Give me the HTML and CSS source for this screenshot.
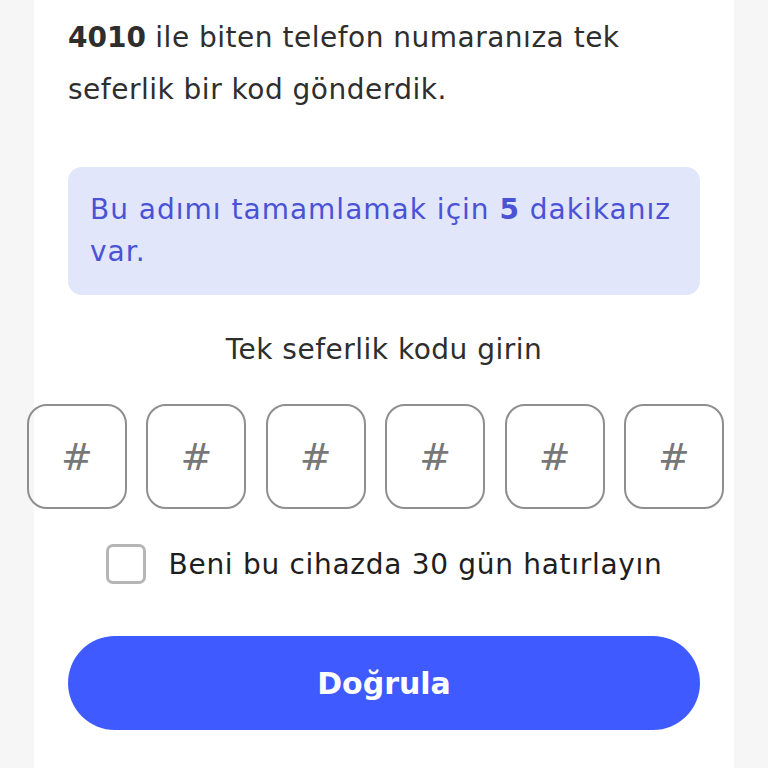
FILE: index.html
```html
<!DOCTYPE html>
<html lang="tr">
<head>
    <meta charset="UTF-8">
    <meta name="viewport" content="width=device-width, initial-scale=1.0">
    <title>Doğrulama</title>
    <link rel="stylesheet" href="styles.css">
</head>
<body>
    <div class="panel">
        <p class="lead"><strong>4010</strong> ile biten telefon numaranıza tek seferlik bir kod gönderdik.</p>

        <div class="notice">
            Bu adımı tamamlamak için <strong>5</strong> dakikanız var.
        </div>

        <div class="code-label">Tek seferlik kodu girin</div>

        <div class="otp">
            <div class="cell">#</div>
            <div class="cell">#</div>
            <div class="cell">#</div>
            <div class="cell">#</div>
            <div class="cell">#</div>
            <div class="cell">#</div>
        </div>

        <label class="remember">
            <span class="checkbox"></span>
            <span>Beni bu cihazda 30 gün hatırlayın</span>
        </label>

        <button class="verify">Doğrula</button>
    </div>
</body>
</html>
```

FILE: styles.css
```css
body {
    margin: 0;
    background-color: #f6f6f6;
    font-family: "DejaVu Sans", "Noto Sans", sans-serif;
    color: #2e2e2e;
}
.panel {
    width: 632px;
    min-height: 756px;
    margin-left: 34px;
    padding: 12px 34px 0;
    background-color: #fff;
}
.lead {
    margin: 0;
    font-size: 28px;
    line-height: 52px;
    letter-spacing: 0.5px;
}
.lead strong {
    font-weight: 700;
    letter-spacing: 0;
}
.notice {
    margin-top: 51px;
    padding: 22px;
    background-color: #e1e6fb;
    border-radius: 14px;
    color: #4a52d6;
    font-size: 28px;
    line-height: 42px;
    letter-spacing: 1px;
}
.code-label {
    margin-top: 35px;
    text-align: center;
    font-size: 28px;
    line-height: 40px;
    letter-spacing: 0.5px;
}
.otp {
    display: flex;
    gap: 19.4px;
    width: 697px;
    margin: 34px 0 0 -41px;
}
.cell {
    box-sizing: border-box;
    width: 100px;
    height: 105px;
    border: 2px solid #8f8f8f;
    border-radius: 20px;
    display: flex;
    align-items: center;
    justify-content: center;
    color: #777;
    font-size: 38px;
}
.remember {
    display: flex;
    align-items: center;
    justify-content: center;
    gap: 23px;
    margin-top: 35px;
    font-size: 28px;
    letter-spacing: 0.7px;
    color: #1e1e1e;
}
.checkbox {
    box-sizing: border-box;
    width: 40px;
    height: 40px;
    border: 3px solid #b5b5b5;
    border-radius: 7px;
}
.verify {
    display: block;
    width: 100%;
    height: 94px;
    margin-top: 52px;
    border: none;
    border-radius: 47px;
    background-color: #3f5bff;
    color: #fff;
    font-family: inherit;
    font-size: 30px;
    font-weight: 700;
}
```
